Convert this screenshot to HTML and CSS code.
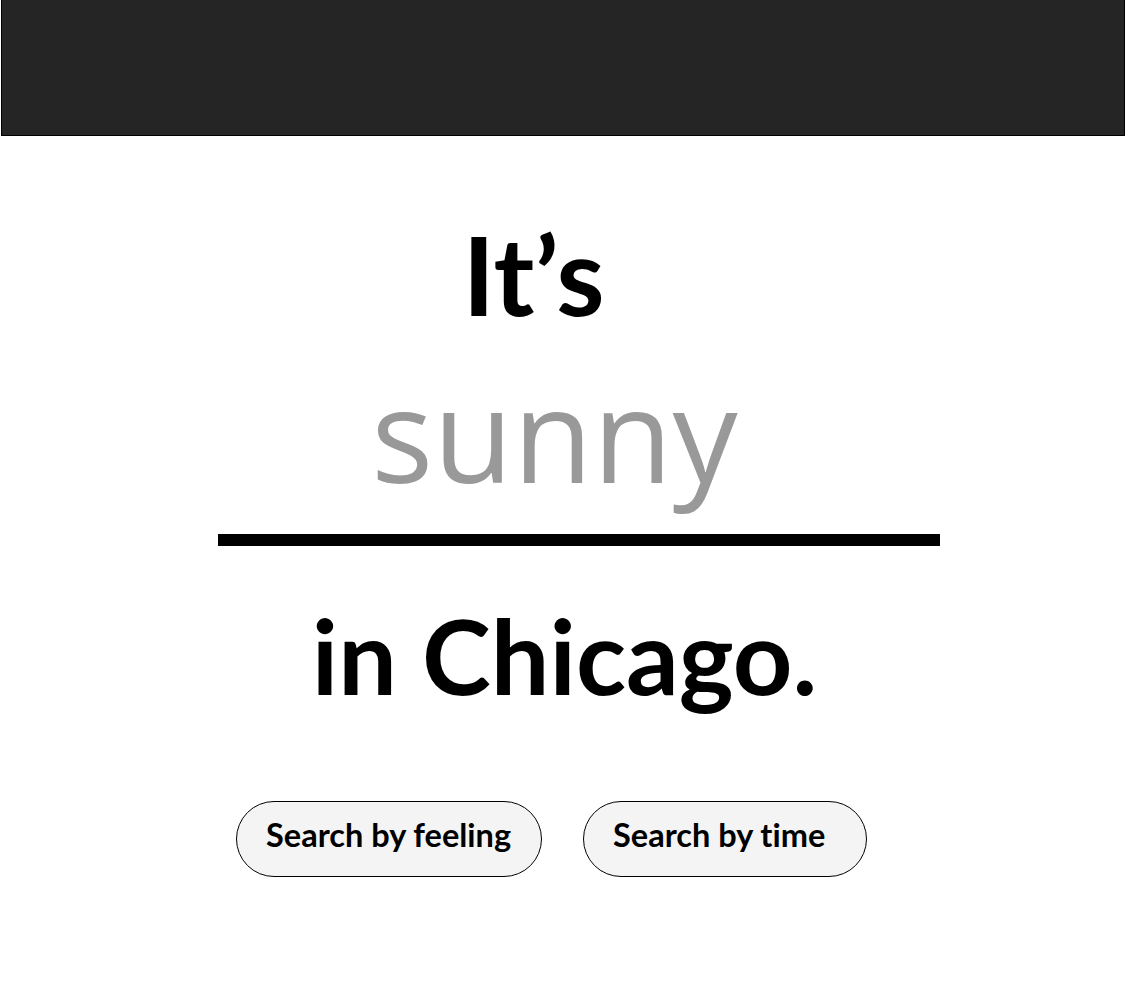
FILE: index.html
```html
<!DOCTYPE html>
<html lang="en">
<head>
<meta charset="utf-8">
<title>It's sunny in Chicago</title>
<link rel="stylesheet" href="styles.css">
</head>
<body>
<header class="topbar"></header>
<main class="hero">
  <h1 class="lead">It’s</h1>
  <div class="field">
    <input class="mood" type="text" placeholder="sunny" aria-label="weather">
  </div>
  <h2 class="place">in Chicago.</h2>
  <div class="actions">
    <button class="pill pill-feeling">Search by feeling</button>
    <button class="pill pill-time">Search by time</button>
  </div>
</main>
</body>
</html>
```
FILE: styles.css
```css
html, body {
  margin: 0;
  padding: 0;
  background: #fff;
}
body {
  font-family: Lato, "Open Sans", sans-serif;
  font-variant-ligatures: none;
  color: #000;
}
.topbar {
  height: 135px;
  margin-left: 1px;
  background: #252525;
  border: 1px solid #000;
  border-top: none;
}
.hero {
  display: flex;
  flex-direction: column;
  align-items: center;
}
.lead {
  margin: 77px 58px 0 0;
  font-size: 110px;
  line-height: 120px;
  font-weight: 700;
}
.field {
  margin: 26px 0 0 32px;
  width: 722px;
}
.mood {
  display: block;
  width: 100%;
  box-sizing: border-box;
  border: none;
  border-bottom: 12px solid #000;
  padding: 0 48px 29px 0;
  font-family: "Open Sans", sans-serif;
  font-size: 130px;
  line-height: 150px;
  height: 187px;
  text-align: center;
  color: #999;
  outline: none;
  background: transparent;
}
.mood::placeholder {
  color: #999;
  opacity: 1;
}
.place {
  margin: 49px 0 0 4px;
  font-size: 104px;
  line-height: 120px;
  font-weight: 700;
}
.actions {
  display: flex;
  gap: 41px;
  margin: 86px 22px 0 0;
}
.pill {
  height: 76px;
  box-sizing: border-box;
  border: 1px solid #000;
  border-radius: 38px;
  background: #f4f4f4;
  font-family: Lato, "Open Sans", sans-serif;
  font-variant-ligatures: none;
  font-weight: 700;
  font-size: 32.5px;
  color: #000;
  padding: 0 0 9px 29px;
  text-align: left;
}
.pill-feeling { width: 306px; }
.pill-time { width: 284px; }
```
